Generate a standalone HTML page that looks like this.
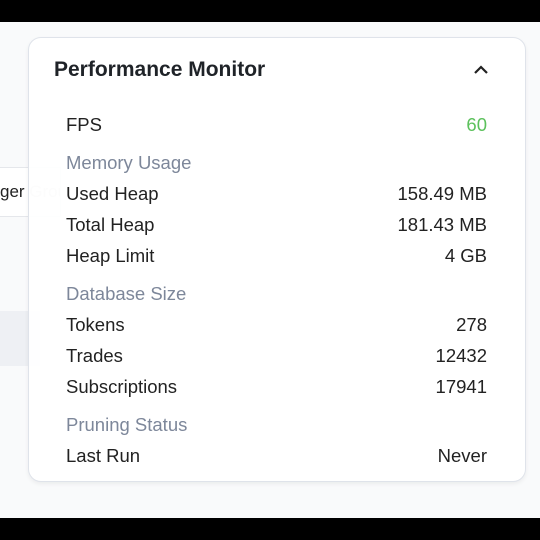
<!DOCTYPE html>
<html><head><style>
html,body{margin:0;padding:0}
body{width:540px;height:540px;position:relative;overflow:hidden;background:#f9fafb;font-family:"Liberation Sans",sans-serif}
.bar{position:absolute;left:0;width:540px;background:#000}
.ext{position:absolute;left:0;top:167px;width:60px;height:48px;background:#fff;border:1px solid #e5e7eb;border-left:none;font-size:17px;color:#222;line-height:48px;white-space:nowrap;overflow:hidden}
.gray{position:absolute;left:0;top:311px;width:40px;height:55px;background:#eef0f4}
.card{position:absolute;left:28px;top:37px;width:496px;height:443px;background:rgba(255,255,255,0.93);border:1px solid #dfe3ea;border-radius:13px;box-shadow:0 2px 4px rgba(0,0,0,0.06)}
.title{position:absolute;left:25px;font-size:21px;font-weight:bold;color:#1f2328}
.row{position:absolute;left:37px;width:421px;font-size:18.5px;color:#222;display:flex;justify-content:space-between;line-height:22px}
.sec{color:#7d879a}
</style></head><body>
<div class="bar" style="top:0;height:22px"></div>
<div class="bar" style="top:518px;height:22px"></div>
<div class="ext">ger <span style="color:#ccc">Grou</span></div>
<div class="gray"></div>
<div class="card">
<div class="title" style="top:20px">Performance Monitor</div>
<svg style="position:absolute;left:444px;top:25px" width="16" height="14" viewBox="0 0 16 14"><path d="M2 10 L8 4 L14 10" fill="none" stroke="#222" stroke-width="2.2"/></svg>
<div class="row" style="top:76px"><span>FPS</span><span style="color:#5cc15c">60</span></div>
<div class="row sec" style="top:114px"><span>Memory Usage</span></div>
<div class="row" style="top:145px"><span>Used Heap</span><span>158.49 MB</span></div>
<div class="row" style="top:176px"><span>Total Heap</span><span>181.43 MB</span></div>
<div class="row" style="top:207px"><span>Heap Limit</span><span>4 GB</span></div>
<div class="row sec" style="top:245px"><span>Database Size</span></div>
<div class="row" style="top:276px"><span>Tokens</span><span>278</span></div>
<div class="row" style="top:307px"><span>Trades</span><span>12432</span></div>
<div class="row" style="top:338px"><span>Subscriptions</span><span>17941</span></div>
<div class="row sec" style="top:376px"><span>Pruning Status</span></div>
<div class="row" style="top:407px"><span>Last Run</span><span>Never</span></div>
</div>
</body></html>
